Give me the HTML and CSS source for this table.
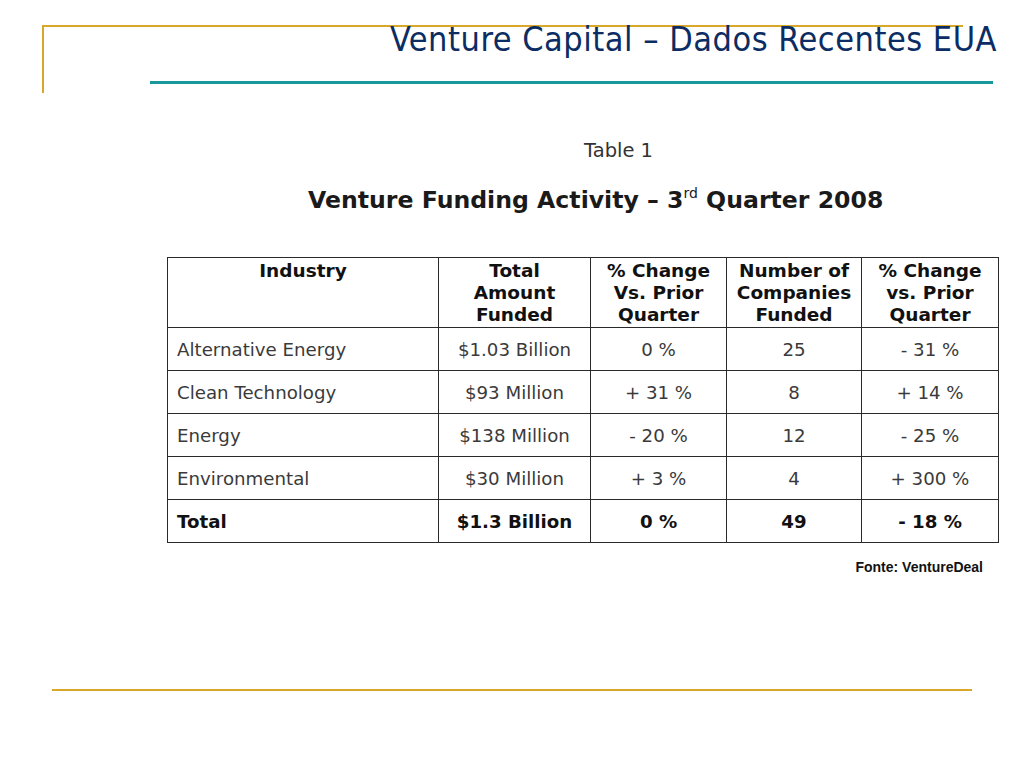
FILE: index.html
```html
<!DOCTYPE html>
<html>
<head>
<meta charset="utf-8">
<link rel="stylesheet" href="styles.css">
</head>
<body>
<div class="slide">
  <header class="head">
    <div class="frame"></div>
    <h1 class="title">Venture Capital – Dados Recentes EUA</h1>
    <div class="rule"></div>
  </header>
  <main class="content">
    <p class="caption">Table 1</p>
    <h2 class="heading">Venture Funding Activity – 3<sup>rd</sup> Quarter 2008</h2>
    <table class="data">
      <colgroup>
        <col class="c1"><col class="c2"><col class="c3"><col class="c4"><col class="c5">
      </colgroup>
      <thead>
        <tr>
          <th>Industry</th>
          <th>Total<br>Amount<br>Funded</th>
          <th>% Change<br>Vs. Prior<br>Quarter</th>
          <th>Number of<br>Companies<br>Funded</th>
          <th>% Change<br>vs. Prior<br>Quarter</th>
        </tr>
      </thead>
      <tbody>
        <tr><td>Alternative Energy</td><td>$1.03 Billion</td><td>0 %</td><td>25</td><td>- 31 %</td></tr>
        <tr><td>Clean Technology</td><td>$93 Million</td><td>+ 31 %</td><td>8</td><td>+ 14 %</td></tr>
        <tr><td>Energy</td><td>$138 Million</td><td>- 20 %</td><td>12</td><td>- 25 %</td></tr>
        <tr><td>Environmental</td><td>$30 Million</td><td>+ 3 %</td><td>4</td><td>+ 300 %</td></tr>
        <tr class="total"><td>Total</td><td>$1.3 Billion</td><td>0 %</td><td>49</td><td>- 18 %</td></tr>
      </tbody>
    </table>
    <p class="source">Fonte: VentureDeal</p>
  </main>
  <footer class="foot"></footer>
</div>
</body>
</html>
```
FILE: styles.css
```css
html, body {
  margin: 0;
  padding: 0;
  background: #ffffff;
}
.slide {
  width: 1024px;
  height: 768px;
  overflow: hidden;
  font-family: "DejaVu Sans", Verdana, sans-serif;
}
.head {
  display: grid;
  height: 95px;
}
.head > * {
  grid-area: 1 / 1;
  align-self: start;
}
.frame {
  margin: 25px 0 0 42px;
  width: 919px;
  height: 66px;
  border-top: 2px solid #d9a82a;
  border-left: 2px solid #d9a82a;
}
.title {
  justify-self: end;
  margin: 17px 27px 0 0;
  font-family: "DejaVu Sans Condensed", "DejaVu Sans", sans-serif;
  font-weight: normal;
  font-size: 34px;
  line-height: 44px;
  color: #0c2d63;
  letter-spacing: 0.5px;
  white-space: nowrap;
}
.rule {
  margin: 81px 0 0 150px;
  width: 843px;
  height: 3px;
  background: #17989a;
}
.content {
  padding-left: 167px;
}
.caption {
  margin: 43px 0 0 417px;
  font-size: 19.5px;
  line-height: 26px;
  color: #333;
}
.heading {
  margin: 20px 0 0 141px;
  font-size: 23.6px;
  line-height: 32px;
  color: #1a1a1a;
  font-weight: bold;
  white-space: nowrap;
}
.heading sup {
  font-size: 14px;
  vertical-align: 10px;
  line-height: 0;
  font-weight: normal;
}
.data {
  margin-top: 41px;
  border-collapse: collapse;
  width: 831px;
  table-layout: fixed;
}
.c1 { width: 271px; }
.c2 { width: 152px; }
.c3 { width: 136px; }
.c4 { width: 135px; }
.c5 { width: 137px; }
.data th, .data td {
  border: 1px solid #2a2a2a;
  padding: 0;
  text-align: center;
}
.data th {
  height: 67px;
  vertical-align: top;
  padding-top: 2px;
  font-size: 18.5px;
  line-height: 22px;
  font-weight: bold;
  color: #111;
}
.data td {
  height: 42px;
  font-size: 18.2px;
  color: #3a3a3a;
}
.data td:first-child {
  text-align: left;
  padding-left: 9px;
}
.data .total td {
  font-weight: bold;
  color: #111;
}
.source {
  margin: 15px 0 0 0;
  width: 816px;
  text-align: right;
  font-family: "Liberation Sans", Arial, sans-serif;
  font-weight: bold;
  font-size: 14px;
  line-height: 18px;
  color: #111;
}
.foot {
  margin: 113px 0 0 52px;
  width: 920px;
  height: 2px;
  background: #d9a82a;
}
```
